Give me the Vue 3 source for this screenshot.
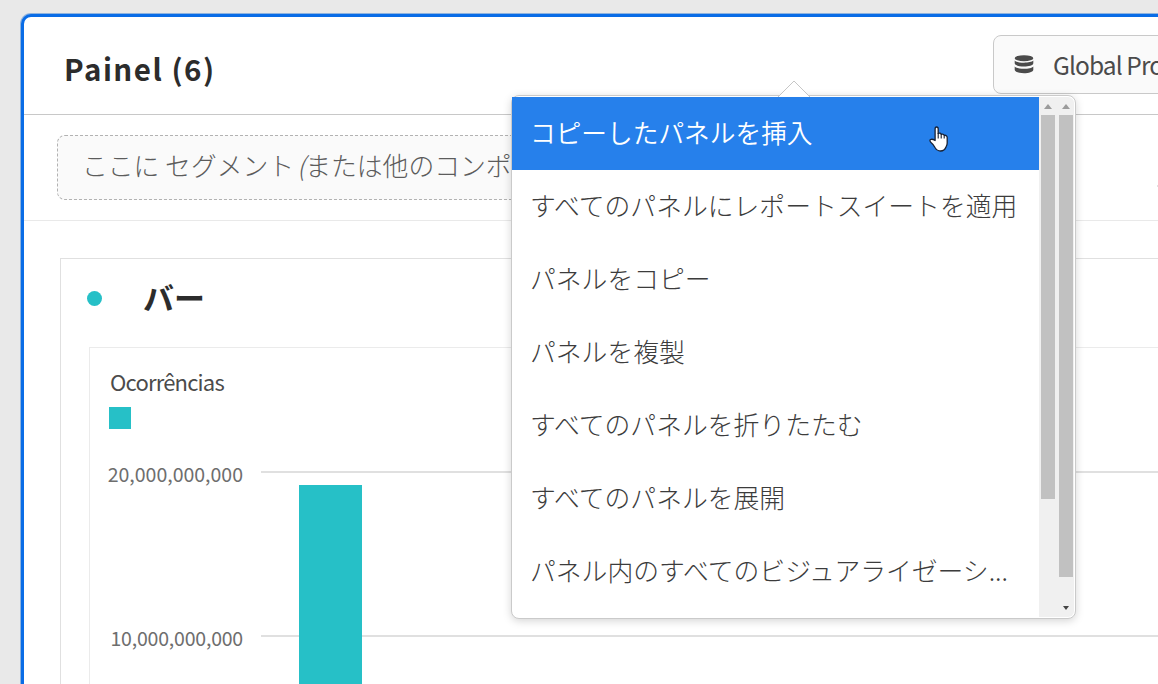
<script setup>
const items = [
  'コピーしたパネルを挿入',
  'すべてのパネルにレポートスイートを適用',
  'パネルをコピー',
  'パネルを複製',
  'すべてのパネルを折りたたむ',
  'すべてのパネルを展開',
  'パネル内のすべてのビジュアライゼーシ...',
]
const ticks = ['20,000,000,000', '10,000,000,000']
</script>

<template>
  <div class="page">
    <section class="panel">
      <header class="head">
        <h1>Painel (6)</h1>
        <div class="suite">
          <svg class="db" width="20" height="19" viewBox="0 0 20 19">
            <ellipse cx="10" cy="3.2" rx="9.3" ry="3" />
            <path d="M.7 5.6C3 8.4 17 8.4 19.3 5.6V8.2C19.3 12.6.7 12.6.7 8.2Z" />
            <path d="M.7 11.4C3 14.5 17 14.5 19.3 11.4V14.7C19.3 19.3.7 19.3.7 14.7Z" />
          </svg>
          <span class="suite-name">Global Pro</span>
        </div>
      </header>
      <div class="filters">
        <div class="drop"><span>ここに セグメント<i>(</i>または他のコンポ</span></div>
        <span class="edge-mark"></span>
      </div>
      <div class="canvas">
        <article class="card">
          <div class="card-head"><span class="dot"></span><h2>バー</h2></div>
          <div class="chart">
            <div class="series">Ocorrências</div>
            <div class="swatch"></div>
            <div class="plot">
              <div class="axis"><span v-for="t in ticks" :key="t">{{ t }}</span></div>
              <div class="grid">
                <div class="bar"></div>
              </div>
            </div>
          </div>
        </article>
      </div>
    </section>

    <div class="menu">
      <svg class="arrow" width="34" height="18" viewBox="0 0 34 18">
        <path d="M1 17L17 1L33 17V18H1Z" fill="#fff" />
        <path d="M1 17L17 1L33 17" fill="none" stroke="#c6c6c6" />
      </svg>
      <div class="list">
        <div v-for="(item, i) in items" :key="item" class="item" :class="{ active: i === 0 }">{{ item }}</div>
      </div>
      <div class="track inner">
        <svg width="8" height="5" viewBox="0 0 8 5"><path d="M0 5L4 0L8 5Z" fill="#9b9b9b" /></svg>
        <div class="thumb"></div>
      </div>
      <div class="track outer">
        <svg width="8" height="5" viewBox="0 0 8 5"><path d="M0 5L4 0L8 5Z" fill="#9b9b9b" /></svg>
        <div class="thumb"></div>
        <svg class="down" width="6" height="4" viewBox="0 0 6 4"><path d="M0 0H6L3 4Z" fill="#444" /></svg>
      </div>
    </div>

    <svg class="cursor" width="20" height="26" viewBox="0 0 20 26">
      <path d="M6.1 14.5V3Q6.1 1 7.6 1Q9.2 1 9.2 3V7.5Q11.5 6.5 12.2 8.3Q14.5 7.5 15.2 9.3Q18 8.9 18.2 11.5V17Q18.2 19 17 21Q15.5 25 11.5 25Q8 25 6 21.5Q4.5 18.5 2 16.5Q.2 14.5 1.5 13.5Q3.5 12.7 6.1 14.5Z" fill="#fff" stroke="#172033" stroke-width="1.3" stroke-linejoin="round" />
      <path d="M9.2 7V12.5M12.2 8V12.5M15.2 9.3V12.5" stroke="#172033" stroke-width="1.1" />
    </svg>
  </div>
</template>

<style>
body { overflow: hidden; }
</style>

<style scoped>
* { box-sizing: border-box; }
.page {
  position: relative;
  width: 1158px;
  height: 684px;
  overflow: hidden;
  background: #e9e9e9;
  padding: 14px 0 0 21px;
  font-family: "Noto Sans CJK JP", "Noto Sans", sans-serif;
  color: #4b4b4b;
}
.panel {
  width: 1200px;
  height: 720px;
  border: 3px solid #096ce6;
  border-radius: 10px;
  background: #fff;
  box-shadow: 0 0 0 1px #8eb3df;
  overflow: hidden;
}
.head {
  height: 98px;
  border-bottom: 1px solid #c8c8c8;
  display: flex;
}
h1 {
  margin: 0 0 0 40px;
  flex: none;
  width: 929px;
  font-size: 29.5px;
  line-height: 40px;
  padding-top: 31px;
  font-weight: 600;
  letter-spacing: 1.5px;
  color: #2c2c2c;
  white-space: nowrap;
}
.suite {
  flex: none;
  margin-top: 18px;
  width: 300px;
  height: 59px;
  border: 1px solid #c9c9c9;
  border-radius: 8px;
  background: #fafafa;
  display: flex;
  padding-left: 20px;
}
.db { margin-top: 19px; fill: #4b4b4b; }
.suite-name { margin-left: 19px; font-size: 24.5px; letter-spacing: -.9px; line-height: 57px; white-space: nowrap; }
.filters {
  height: 106px;
  border-bottom: 1px solid #e9e9e9;
  padding: 20px 0 0 33px;
  display: flex;
}
.drop {
  width: 1000px;
  height: 65px;
  border: 1px dashed #b2b2b2;
  border-radius: 8px;
  background: #fafafa;
  padding-left: 24px;
  font-size: 25.8px;
  line-height: 58px;
  font-weight: 300;
  color: #5c5c5c;
  white-space: nowrap;
}
.drop i { margin-left: 3px; }
.edge-mark { width: 2px; height: 2px; margin: 50px 0 0 100px; background: #e1e1e1; }
.canvas { padding: 37px 0 0 36px; }
.card { height: 600px; border: 1px solid #e0e0e0; padding-left: 28px; }
.card-head { height: 88px; display: flex; align-items: flex-start; }
.dot { width: 15px; height: 15px; margin: 32px 0 0 -2px; border-radius: 50%; background: #26c0c7; }
h2 { margin: 18px 0 0 41px; font-size: 31px; line-height: 40px; font-weight: 700; color: #2c2c2c; }
.chart { height: 500px; border: 1px solid #ebebeb; border-width: 1px 0 0 1px; padding: 18px 0 0 19px; }
.series { height: 32px; font-size: 22px; line-height: 30px; letter-spacing: -.8px; padding-left: 1px; }
.swatch { width: 22px; height: 22px; margin-top: 9px; background: #26c0c7; }
.plot { display: flex; margin-top: 42px; }
.axis {
  width: 134px;
  margin-top: -12px;
  display: flex;
  flex-direction: column;
  align-items: flex-end;
  font-size: 19.5px;
  line-height: 30px;
  color: #6e6e6e;
}
.axis span { height: 164px; white-space: nowrap; }
.axis span:last-child { letter-spacing: -.2px; }
.grid {
  margin-left: 18px;
  flex: 1;
  height: 260px;
  padding: 14px 0 0 38px;
  background: repeating-linear-gradient(#e0e0e0 0 2px, transparent 2px 164px);
}
.bar { width: 63px; height: 240px; background: #26c0c7; }

.menu {
  position: absolute;
  left: 511px;
  top: 95px;
  width: 565px;
  height: 524px;
  background: #fff;
  border: 1px solid #cacaca;
  border-radius: 8px;
  box-shadow: 0 2px 8px rgba(0, 0, 0, .17);
  display: flex;
  padding: 1px 1px 1px 0;
}
.arrow { position: absolute; left: 265px; top: -16px; }
.list { width: 527px; z-index: 1; }
.item {
  height: 73.2px;
  padding-left: 18px;
  font-size: 25.8px;
  line-height: 69px;
  font-weight: 300;
  color: #3c3c3c;
  white-space: nowrap;
}
.item.active { background: #2680eb; height: 72.5px; color: #fff; font-size: 25.7px; font-weight: 350; }
.track {
  width: 18px;
  background: #f0f0f0;
  display: flex;
  flex-direction: column;
  align-items: center;
  padding-top: 7px;
}
.outer { width: 17px; border-radius: 0 6px 6px 0; }
.thumb { width: 14px; height: 384px; margin-top: 6px; background: #c1c1c1; }
.outer .thumb { height: 462px; }
.down { margin-top: 29px; }
.cursor { position: absolute; left: 929px; top: 126px; z-index: 2; }
</style>
